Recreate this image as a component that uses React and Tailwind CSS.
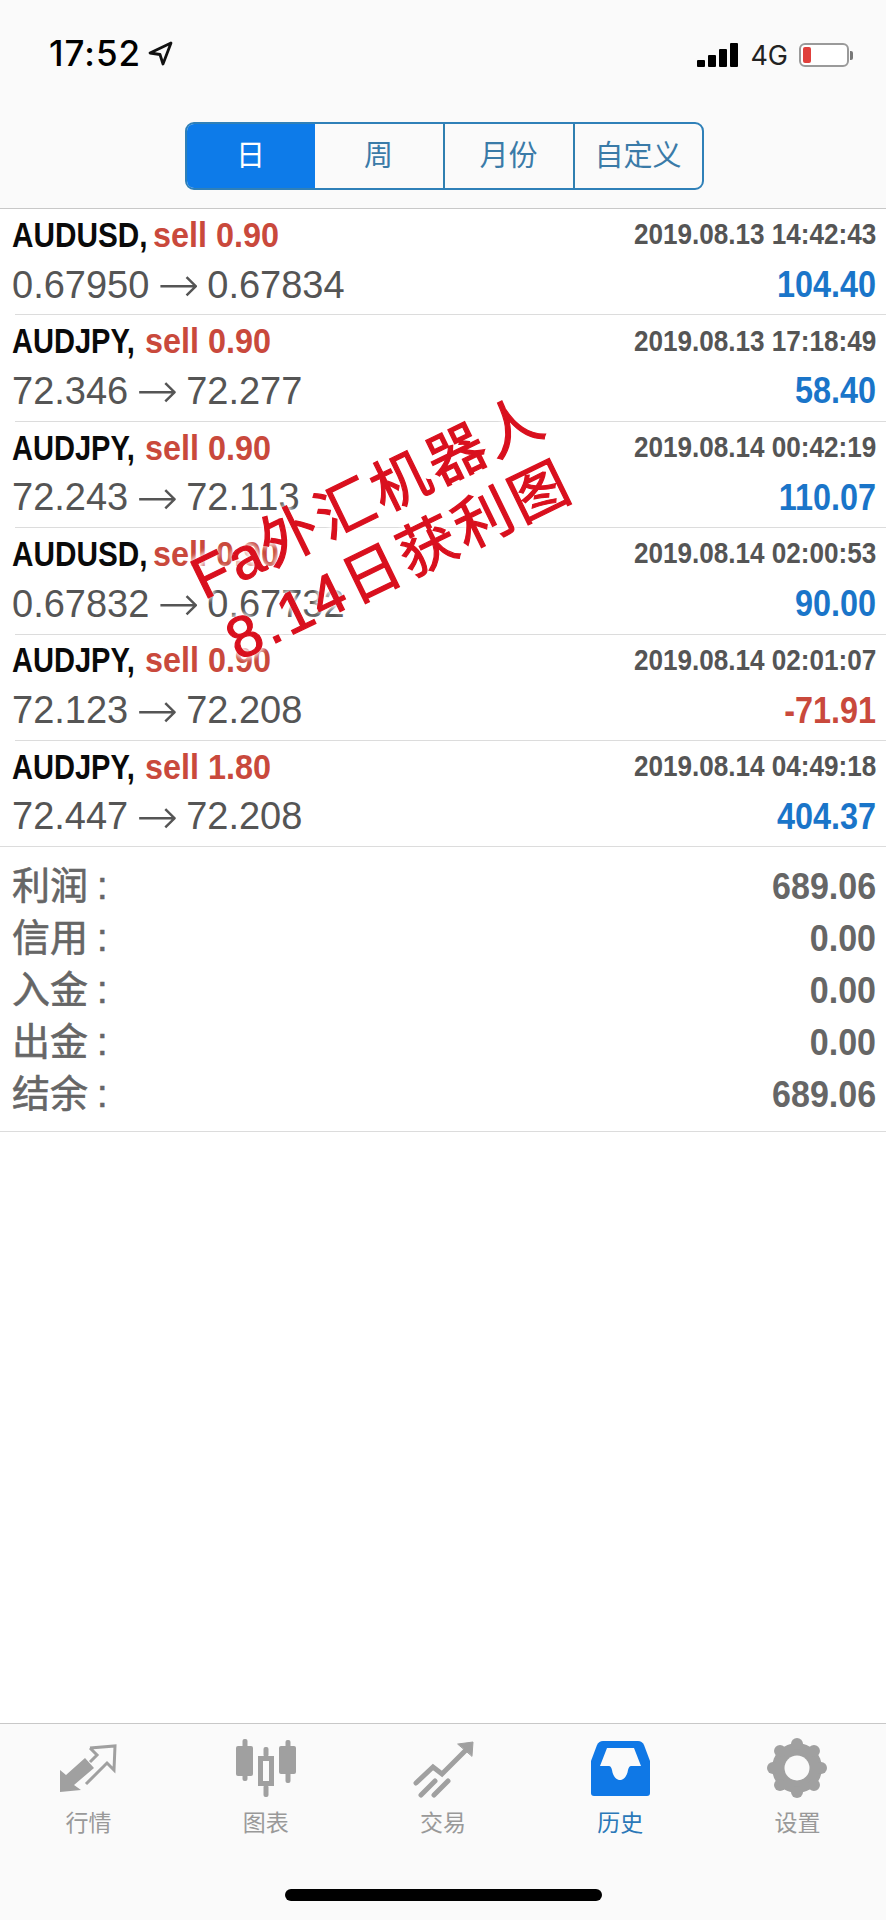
import React from 'react'

const trades = [
  { symbol: 'AUDUSD,', volume: 'sell 0.90', time: '2019.08.13 14:42:43', from: '0.67950', to: '0.67834', profit: '104.40' },
  { symbol: 'AUDJPY,', volume: 'sell 0.90', time: '2019.08.13 17:18:49', from: '72.346', to: '72.277', profit: '58.40' },
  { symbol: 'AUDJPY,', volume: 'sell 0.90', time: '2019.08.14 00:42:19', from: '72.243', to: '72.113', profit: '110.07' },
  { symbol: 'AUDUSD,', volume: 'sell 0.90', time: '2019.08.14 02:00:53', from: '0.67832', to: '0.67732', profit: '90.00' },
  { symbol: 'AUDJPY,', volume: 'sell 0.90', time: '2019.08.14 02:01:07', from: '72.123', to: '72.208', profit: '-71.91', loss: true },
  { symbol: 'AUDJPY,', volume: 'sell 1.80', time: '2019.08.14 04:49:18', from: '72.447', to: '72.208', profit: '404.37', last: true },
]

const summary = [
  ['利润', '689.06'],
  ['信用', '0.00'],
  ['入金', '0.00'],
  ['出金', '0.00'],
  ['结余', '689.06'],
]

const QuotesIcon = () => (
  <svg width="57" height="50" viewBox="0 0 57 50">
    <path d="M0 49V27L6 32L25 15L34 25L14 42L21 47Z" fill="#a0a0a0" />
    <path d="M30 5L55 3L54 27L47 20L26 41M30 5L37 12L30 19" fill="none" stroke="#a0a0a0" strokeWidth="3" />
  </svg>
)

const ChartIcon = () => (
  <svg width="60" height="58" viewBox="0 0 60 58" fill="#a0a0a0">
    <rect x="6.5" y="0" width="5" height="42" rx="2" />
    <rect x="0" y="7" width="17" height="30" rx="2" />
    <rect x="27.5" y="8" width="5" height="10" rx="2" />
    <rect x="27.5" y="46" width="5" height="12" rx="2" />
    <path fillRule="evenodd" d="M22 17H38V47H22ZM27 22V42H33V22Z" />
    <rect x="49.5" y="1" width="5" height="43" rx="2" />
    <rect x="43" y="7" width="17" height="28" rx="2" />
  </svg>
)

const TradeIcon = () => (
  <svg width="65" height="63" viewBox="20 5 65 63" fill="none" stroke="#a0a0a0" strokeWidth="5" strokeLinecap="round">
    <path d="M26 51L43 35L52 42L78 16" />
    <path d="M31 63L45 49M44 63L58 49" />
    <path d="M68 12L83 10L82 24Z" fill="#a0a0a0" strokeWidth="1" />
  </svg>
)

const HistoryIcon = () => (
  <svg width="59" height="55" viewBox="0 0 59 55">
    <path d="M12 0H47Q51 0 53 4L59 20V52Q59 55 56 55H3Q0 55 0 52V20L6 4Q8 0 12 0Z" fill="#0f78e6" />
    <path d="M16 7H43L50 25H40Q38 25 37 29C36 36 32 39 29 39C26 39 22 36 21 29Q20 25 18 25H9Z" fill="#fafafa" />
  </svg>
)

const GearIcon = () => (
  <svg width="60" height="60" viewBox="0 0 60 60">
    <circle cx="30" cy="30" r="25" fill="#a0a0a0" />
    {[0, 45, 90, 135, 180, 225, 270, 315].map((a) => (
      <circle key={a} cx="30" cy="6" r="6" fill="#a0a0a0" transform={`rotate(${a} 30 30)`} />
    ))}
    <circle cx="30" cy="30" r="12.5" fill="#fafafa" />
  </svg>
)

const tabs = [
  { label: '行情', icon: <QuotesIcon /> },
  { label: '图表', icon: <ChartIcon /> },
  { label: '交易', icon: <TradeIcon /> },
  { label: '历史', icon: <HistoryIcon />, active: true },
  { label: '设置', icon: <GearIcon /> },
]

const StatusBar = () => (
  <div className="flex h-[110px] items-start justify-between pl-[49px] pr-[33px] pt-[36px]">
    <div className="-mt-[2px] flex h-[38px] items-center gap-[7px]">
      <span className="font-['Inter'] text-[35px] leading-none font-medium tracking-[1px] text-black">17:52</span>
      <svg width="25" height="25" viewBox="0 0 25 25" fill="none" stroke="#111" strokeWidth="2.8" strokeLinejoin="round">
        <path d="M23 2L2 12L12 13.5L15 23Z" />
      </svg>
    </div>
    <div className="flex h-[38px] items-center">
      <div className="flex h-[24px] items-end gap-[3px]">
        <div className="h-[7px] w-[8px] rounded-[1px] bg-black" />
        <div className="h-[12px] w-[8px] rounded-[1px] bg-black" />
        <div className="h-[18px] w-[8px] rounded-[1px] bg-black" />
        <div className="h-[24px] w-[8px] rounded-[1px] bg-black" />
      </div>
      <span className="ml-[12px] font-['Inter'] text-[27px] leading-none text-[#222]">4G</span>
      <div className="ml-[11px] flex h-[24px] w-[50px] items-center rounded-[6px] border-2 border-[#9a9a9a] bg-white pl-[2px]">
        <div className="h-[16px] w-[8px] rounded-[2px] bg-[#e0403c]" />
      </div>
      <div className="ml-[1px] h-[9px] w-[3px] rounded-r-[2px] bg-[#777]" />
    </div>
  </div>
)

const SegmentedControl = () => (
  <div className="mx-auto mt-[12px] flex h-[68px] w-[519px] translate-x-[1px] overflow-hidden rounded-[9px] border-2 border-[#2f80b8] text-[29px] text-[#3a7ba8]">
    <div className="flex w-[128px] items-center justify-center bg-[#0d7be9] pt-[2px] text-white">日</div>
    <div className="flex w-[130px] items-center justify-center border-r-2 border-[#2f7fb0] pt-[2px]">周</div>
    <div className="flex w-[130px] items-center justify-center border-r-2 border-[#2f7fb0] pt-[2px]">月份</div>
    <div className="flex flex-1 items-center justify-center pt-[2px]">自定义</div>
  </div>
)

const TradeRow = ({ trade }) => (
  <div className={`border-b border-[#dcdcdc] ${trade.last ? '' : 'ml-[15px]'}`}>
    <div className={`flex h-[105.4px] flex-col gap-[3px] pt-[4px] pr-[10px] ${trade.last ? 'pl-[12px]' : '-ml-[3px]'}`}>
      <div className="flex h-[44px] items-center justify-between">
        <div className="flex items-center whitespace-nowrap">
          <span className={`inline-block origin-left text-[35px] font-bold text-[#0a0a0a] ${trade.symbol === 'AUDUSD,' ? '-mr-[18px] scale-x-[.85]' : '-mr-[15px] scale-x-[.83]'}`}>{trade.symbol}</span>
          <span className="inline-block origin-left scale-x-[.925] text-[35px] font-bold text-[#c9493c]">{trade.volume}</span>
        </div>
        <span className="inline-block origin-right scale-x-[.9] text-[29px] font-bold whitespace-nowrap text-[#555555]">{trade.time}</span>
      </div>
      <div className="flex h-[50px] items-center justify-between">
        <div className="flex items-center whitespace-nowrap text-[38px] text-[#555555]">
          <span>{trade.from}</span>
          <span className="mx-[8px] font-['DejaVu_Sans'] text-[50px] leading-none font-extralight">→</span>
          <span>{trade.to}</span>
        </div>
        <span className={`inline-block origin-right scale-x-[.9] text-[36px] font-bold ${trade.loss ? 'text-[#c9493c]' : 'text-[#1a75c9]'}`}>{trade.profit}</span>
      </div>
    </div>
  </div>
)

export default function App() {
  return (
    <div className="relative flex h-[1920px] w-[886px] flex-col overflow-hidden bg-white font-['Liberation_Sans','Noto_Sans_CJK_SC',sans-serif]">
      <header className="h-[209px] border-b border-[#c8c8c8] bg-[#fafafa]">
        <StatusBar />
        <SegmentedControl />
      </header>

      <main className="flex-1">
        {trades.map((t) => (
          <TradeRow key={t.time} trade={t} />
        ))}
        <div className="flex flex-col border-b border-[#dcdcdc] pt-[13px] pb-[11px] pl-[12px] pr-[10px] text-[#666666]">
          {summary.map(([label, value]) => (
            <div key={label} className="flex h-[52px] items-center justify-between">
              <span className="text-[38px] [-webkit-text-stroke:0.6px_#666666]">
                {label}
                <span className="ml-[9px]">:</span>
              </span>
              <span className="inline-block origin-right scale-x-[.92] text-[37px] font-bold">{value}</span>
            </div>
          ))}
        </div>
      </main>

      <footer className="h-[197px] border-t border-[#c8c8c8] bg-[#fafafa]">
        <div className="grid grid-cols-5 pt-[12px]">
          {tabs.map((tab) => (
            <div key={tab.label} className="flex flex-col items-center">
              <div className="flex h-[64px] items-center justify-center">{tab.icon}</div>
              <span className={`mt-[8px] text-[23px] leading-[30px] ${tab.active ? 'text-[#2a78b8]' : 'text-[#999999]'}`}>{tab.label}</span>
            </div>
          ))}
        </div>
        <div className="mx-auto mt-[51px] h-[12px] w-[317px] rounded-full bg-black" />
      </footer>

      {/* stamped watermark over the list */}
      <div className="absolute left-[384px] top-[529px] -translate-x-1/2 -translate-y-1/2 -rotate-[26deg] text-center text-[58px] leading-[70px] tracking-[4px] whitespace-nowrap text-[#d9101e] [-webkit-text-stroke:1.2px_#d9101e] [text-shadow:0_0_6px_white,0_0_6px_white,0_0_6px_white]">
        <div>Fa外汇机器人</div>
        <div>8.14日获利图</div>
      </div>
    </div>
  )
}
